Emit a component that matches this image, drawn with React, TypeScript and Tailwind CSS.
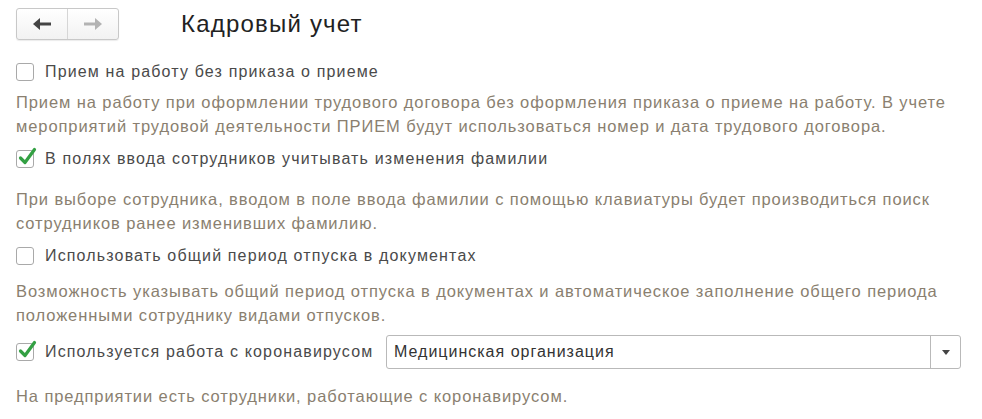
type Props = { checked?: boolean; label: string };

function Check({ checked, label }: Props) {
    return (
        <div className="flex items-center h-6">
            <span className="relative w-[18px] h-[18px] border border-[#a9a9a9] rounded-[3px] bg-white shrink-0">
                {checked && (
                    <svg className="absolute -left-[1px] -top-[5px]" width="22" height="22" viewBox="0 0 22 22">
                        <path d="M4.5 12 L9 16.5 L18.5 3.5" fill="none" stroke="#33a043" strokeWidth="3.2" strokeLinecap="round" strokeLinejoin="round" />
                    </svg>
                )}
            </span>
            <span className="ml-[11px] text-[16px] tracking-[1.15px] text-[#4a4a4a] whitespace-nowrap">{label}</span>
        </div>
    );
}

function Hint({ children }: { children: React.ReactNode }) {
    return <p className="text-[16.5px] tracking-[0.9px] leading-6 text-[#8a7f70] pr-4">{children}</p>;
}

function Arrow({ dir, color }: { dir: "left" | "right"; color: string }) {
    return (
        <svg width="20" height="14" viewBox="0 0 20 14" className={dir === "right" ? "-scale-x-100" : ""}>
            <path d="M1 7 L8 1 V13 Z" fill={color} />
            <rect x="7" y="5.5" width="12" height="3" fill={color} />
        </svg>
    );
}

export default function App() {
    return (
        <main className="w-[982px] h-[419px] bg-white overflow-hidden pl-4 pt-2 font-['Liberation_Sans',Arial,sans-serif]">
            {/* шапка */}
            <header className="flex items-center h-8">
                <div className="flex w-[103px] h-8 border border-[#c8c8c8] rounded-[3px] bg-gradient-to-b from-white to-[#f2f2f2] shadow-[0_1px_1px_rgba(0,0,0,0.08)]">
                    <button className="flex-1 flex items-center justify-center border-r border-[#d6d6d6]">
                        <Arrow dir="left" color="#444" />
                    </button>
                    <button className="flex-1 flex items-center justify-center">
                        <Arrow dir="right" color="#b3b3b3" />
                    </button>
                </div>
                <h1 className="ml-[62px] text-[24px] tracking-[1.2px] text-[#222]">Кадровый учет</h1>
            </header>

            <section className="mt-5">
                <Check label="Прием на работу без приказа о приеме" />
            </section>
            <div className="mt-[6px]">
                <Hint>
                    Прием на работу при оформлении трудового договора без оформления приказа о приеме на работу. В учете
                    мероприятий трудовой деятельности ПРИЕМ будут использоваться номер и дата трудового договора.
                </Hint>
            </div>

            <section className="mt-[9px]">
                <Check checked label="В полях ввода сотрудников учитывать изменения фамилии" />
            </section>
            <div className="mt-4">
                <Hint>
                    При выборе сотрудника, вводом в поле ввода фамилии с помощью клавиатуры будет производиться поиск
                    сотрудников ранее изменивших фамилию.
                </Hint>
            </div>

            <section className="mt-[9px]">
                <Check label="Использовать общий период отпуска в документах" />
            </section>
            <div className="mt-[11px]">
                <Hint>
                    Возможность указывать общий период отпуска в документах и автоматическое заполнение общего периода
                    положенными сотруднику видами отпусков.
                </Hint>
            </div>

            <section className="mt-2 flex items-center h-[34px]">
                <Check checked label="Используется работа с коронавирусом" />
                <div className="ml-auto mr-[21px] flex w-[575px] h-[34px] border border-[#b9b9b9] rounded-[3px] bg-white">
                    <span className="flex-1 flex items-center pl-[7px] text-[16px] tracking-[1px] text-[#333]">Медицинская организация</span>
                    <span className="w-[30px] flex items-center justify-center border-l border-[#b9b9b9]">
                        <svg width="8" height="5" viewBox="0 0 8 5">
                            <path d="M0 0 H8 L4 5 Z" fill="#444" />
                        </svg>
                    </span>
                </div>
            </section>
            <div className="mt-[15px]">
                <Hint>На предприятии есть сотрудники, работающие с коронавирусом.</Hint>
            </div>
        </main>
    );
}
